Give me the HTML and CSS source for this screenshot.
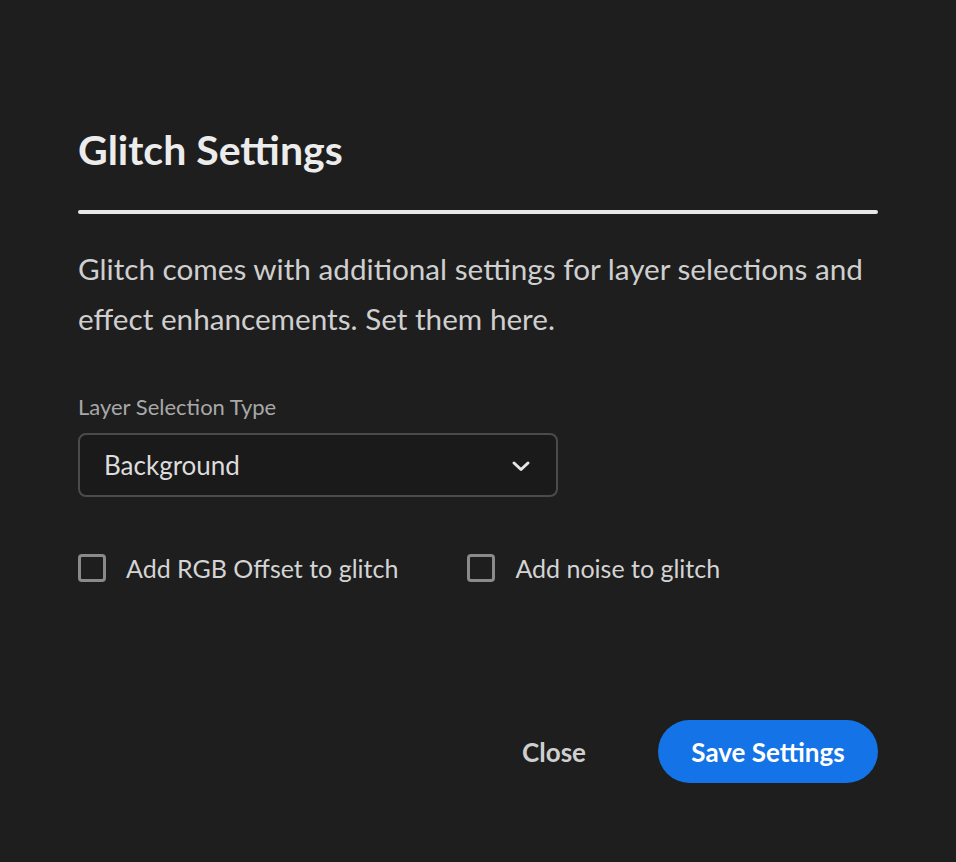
FILE: index.html
```html
<!DOCTYPE html>
<html>
<head>
<meta charset="utf-8">
<link rel="stylesheet" href="styles.css">
</head>
<body>
<div class="dialog">
  <h1 class="title">Glitch Settings</h1>
  <div class="divider"></div>
  <p class="desc">Glitch comes with additional settings for layer selections and effect enhancements. Set them here.</p>
  <div class="field">
    <div class="label">Layer Selection Type</div>
    <div class="select">
      <span>Background</span>
      <svg class="chev" width="20" height="12" viewBox="0 0 20 12"><path d="M3 3 L10 9.5 L17 3" fill="none" stroke="#e6e6e6" stroke-width="3" stroke-linecap="round" stroke-linejoin="round"/></svg>
    </div>
  </div>
  <div class="checks">
    <label class="check"><span class="box"></span><span>Add RGB Offset to glitch</span></label>
    <label class="check"><span class="box"></span><span>Add noise to glitch</span></label>
  </div>
  <div class="actions">
    <button class="btn-close">Close</button>
    <button class="btn-save">Save Settings</button>
  </div>
</div>
</body>
</html>
```

FILE: styles.css
```css
html, body {
  margin: 0;
  padding: 0;
  background: #1e1e1e;
}
body {
  font-family: Lato, "Open Sans", sans-serif;
  color: #d4d4d4;
  width: 956px;
  height: 862px;
}
.dialog {
  width: 800px;
  padding: 120px 0 0 78px;
  display: flex;
  flex-direction: column;
}
.title {
  margin: 0;
  font-size: 41px;
  line-height: 60px;
  font-weight: 700;
  color: #ececec;
}
.divider {
  margin-top: 30px;
  height: 4px;
  border-radius: 2px;
  background: #e8e8e8;
}
.desc {
  margin: 30px 0 0;
  font-size: 29.7px;
  line-height: 50px;
  color: #cfcfcf;
}
.field {
  margin-top: 49px;
  display: flex;
  flex-direction: column;
}
.label {
  font-size: 22px;
  line-height: 28px;
  color: #a8a8a8;
}
.select {
  margin-top: 12px;
  height: 60px;
  border: 2px solid #4b4b4b;
  border-radius: 8px;
  background: #1a1a1a;
  display: flex;
  align-items: center;
  justify-content: space-between;
  padding: 0 25px 0 24px;
  box-sizing: content-box;
  width: 427px;
  font-size: 26px;
  color: #dcdcdc;
}
.chev { margin-top: 2px; }
.checks {
  margin-top: 56px;
  display: flex;
  gap: 69px;
}
.check {
  display: flex;
  align-items: center;
  gap: 20px;
  font-size: 25px;
  color: #d4d4d4;
}
.box {
  width: 22px;
  height: 22px;
  border: 3px solid #8a8a8a;
  border-radius: 4px;
}
.actions {
  margin-top: 137px;
  display: flex;
  justify-content: flex-end;
  align-items: center;
  gap: 72px;
}
button {
  font-family: inherit;
  font-weight: 700;
  font-size: 26px;
  border: none;
  cursor: pointer;
}
.btn-close {
  background: none;
  color: #cfcfcf;
  padding: 0;
}
.btn-save {
  background: #1473e6;
  color: #fff;
  height: 63px;
  width: 220px;
  border-radius: 32px;
}
```
